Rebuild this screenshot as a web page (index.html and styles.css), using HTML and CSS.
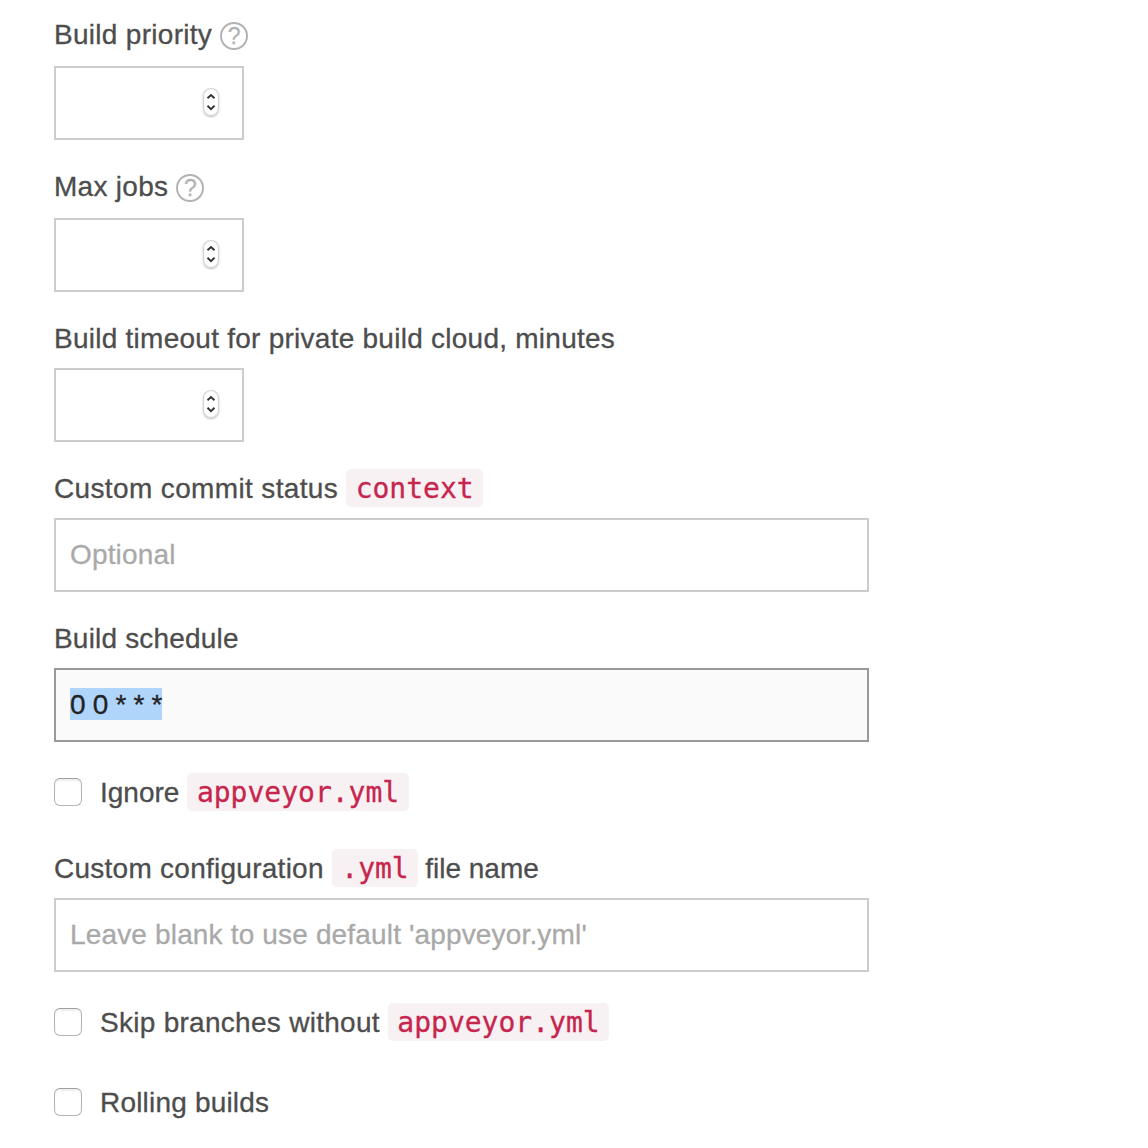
FILE: index.html
```html
<!DOCTYPE html>
<html lang="en">
<head>
<meta charset="utf-8">
<title>Build settings</title>
<link rel="stylesheet" href="styles.css">
</head>
<body>
<svg class="defs" aria-hidden="true">
  <symbol id="stepper" viewBox="0 0 16 28"><path d="M4.5 10.3 8 7l3.5 3.3M4.5 17.8 8 21.1l3.5-3.3" fill="none" stroke="#333" stroke-width="1.9"/></symbol>
</svg>
<form class="form">
  <div class="field">
    <div class="label label-help"><span class="text t-priority">Build priority</span><span class="help">?</span></div>
    <div class="input number"><span class="stepper"><svg><use href="#stepper"/></svg></span></div>
  </div>
  <div class="field">
    <div class="label label-help"><span class="text t-jobs">Max jobs</span><span class="help">?</span></div>
    <div class="input number"><span class="stepper"><svg><use href="#stepper"/></svg></span></div>
  </div>
  <div class="field">
    <div class="label"><span class="text t-timeout">Build timeout for private build cloud, minutes</span></div>
    <div class="input number"><span class="stepper"><svg><use href="#stepper"/></svg></span></div>
  </div>
  <div class="field">
    <div class="label"><span class="text t-status">Custom commit status</span><code>context</code></div>
    <div class="input"><span class="placeholder">Optional</span></div>
  </div>
  <div class="field">
    <div class="label"><span class="text t-schedule">Build schedule</span></div>
    <div class="input focused"><span class="selected">0 0 * * *</span></div>
  </div>
  <div class="check"><span class="box"></span><span class="text">Ignore</span><code>appveyor.yml</code></div>
  <div class="field field-config">
    <div class="label"><span class="text t-config">Custom configuration</span><code>.yml</code><span class="text t-file">file name</span></div>
    <div class="input"><span class="placeholder">Leave blank to use default 'appveyor.yml'</span></div>
  </div>
  <div class="check"><span class="box"></span><span class="text t-skip">Skip branches without</span><code>appveyor.yml</code></div>
  <div class="check check-last"><span class="box"></span><span class="text t-rolling">Rolling builds</span></div>
</form>
</body>
</html>
```
FILE: styles.css
```css
* { box-sizing: border-box; }
body {
  margin: 0;
  background: #fff;
  color: #4d4d4d;
  font: 28px/40px "Liberation Sans", Arial, sans-serif;
}
.defs { position: absolute; width: 0; height: 0; }
.form { width: 869px; padding: 14px 0 0 54px; }
.field { margin-bottom: 26px; }
.label, .check { display: flex; align-items: center; height: 40px; gap: 8px; white-space: nowrap; -webkit-text-stroke: 0.3px; }
.label { margin-bottom: 10px; }
.label-help { margin-bottom: 12px; }
.text { margin-top: 2px; }
.t-priority, .t-jobs { letter-spacing: 0.29px; }
.t-timeout { letter-spacing: 0.255px; }
.t-status { letter-spacing: 0.36px; }
.t-schedule, .t-rolling { letter-spacing: 0.19px; }
.t-config { letter-spacing: 0.26px; }
.t-file { margin-left: -1px; }
.t-skip { letter-spacing: 0.28px; }
.help {
  width: 28px; height: 28px; margin-top: 4px;
  border: 2px solid #b3b3b3; border-radius: 50%;
  color: #b3b3b3; font-size: 23px; line-height: 25px; text-align: center;
}
.input { display: flex; align-items: center; height: 74px; padding: 0 14px; border: 2px solid #ccc; }
.number { width: 190px; padding-right: 23px; justify-content: flex-end; }
.stepper {
  width: 16px; height: 28px; margin-top: -2px;
  border-radius: 8px; background: #fff;
  box-shadow: inset 0 0 1px 1px #d0d0d0, 0 1px 2px #bbb;
}
.stepper svg { display: block; width: 16px; height: 28px; }
.placeholder { color: #a9a9a9; white-space: nowrap; letter-spacing: 0.16px; -webkit-text-stroke: 0.3px; }
.focused { border-color: #999; background: #fafafa; }
.selected { height: 32px; line-height: 34px; margin-top: -2px; background: #b0d5fb; color: #222; white-space: nowrap; letter-spacing: -0.33px; -webkit-text-stroke: 0.3px; }
code {
  height: 38px; padding: 0 9.5px; border-radius: 5px;
  background: #f7f1f3; color: #c7254e;
  font: 28px/40px "DejaVu Sans Mono", monospace;
  -webkit-text-stroke: 0.3px;
}
.check { margin-top: 30px; }
.field:has(+ .check) { margin-bottom: 0; }
.field-config { margin-top: 36px; }
.check-last { margin-top: 40px; }
.box {
  width: 28px; height: 28px; margin-right: 10px;
  border: 1.5px solid #b5b5b5; border-top-color: #a0a0a0; border-radius: 6px;
  box-shadow: inset 0 2px 2px #eee;
}
```
